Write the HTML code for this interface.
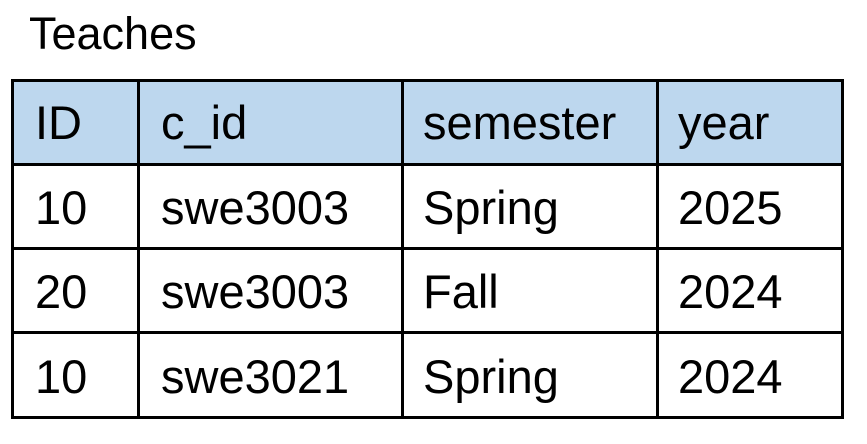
<!DOCTYPE html>
<html><head><style>
body{margin:0;width:867px;height:444px;background:#fff;position:relative;overflow:hidden;font-family:"Liberation Sans",sans-serif;color:#000}
.t{position:absolute;font-size:47px;line-height:46px;white-space:nowrap}
.h{position:absolute;background:#000}
</style></head><body>
<div class="t" style="left:29px;top:12px;font-size:45px;line-height:43px">Teaches</div>
<div style="position:absolute;left:12px;top:80px;width:831px;height:84px;background:#bdd7ee"></div>
<div class="h" style="left:11px;top:79px;width:833px;height:3px"></div>
<div class="h" style="left:11px;top:163px;width:833px;height:3px"></div>
<div class="h" style="left:11px;top:247px;width:833px;height:3px"></div>
<div class="h" style="left:11px;top:331px;width:833px;height:3px"></div>
<div class="h" style="left:11px;top:416px;width:833px;height:3px"></div>
<div class="h" style="left:11px;top:79px;width:3px;height:340px"></div>
<div class="h" style="left:137px;top:79px;width:3px;height:340px"></div>
<div class="h" style="left:401px;top:79px;width:3px;height:340px"></div>
<div class="h" style="left:656px;top:79px;width:3px;height:340px"></div>
<div class="h" style="left:841px;top:79px;width:3px;height:340px"></div>

<div class="t" style="left:35px;top:100px">ID</div>
<div class="t" style="left:161px;top:100px">c_id</div>
<div class="t" style="left:423px;top:100px">semester</div>
<div class="t" style="left:678px;top:100px">year</div>

<div class="t" style="left:35px;top:185px">10</div>
<div class="t" style="left:161px;top:185px">swe3003</div>
<div class="t" style="left:423px;top:185px">Spring</div>
<div class="t" style="left:678px;top:185px">2025</div>

<div class="t" style="left:35px;top:269px">20</div>
<div class="t" style="left:161px;top:269px">swe3003</div>
<div class="t" style="left:423px;top:269px">Fall</div>
<div class="t" style="left:678px;top:269px">2024</div>

<div class="t" style="left:35px;top:354px">10</div>
<div class="t" style="left:161px;top:354px">swe3021</div>
<div class="t" style="left:423px;top:354px">Spring</div>
<div class="t" style="left:678px;top:354px">2024</div>
</body></html>
